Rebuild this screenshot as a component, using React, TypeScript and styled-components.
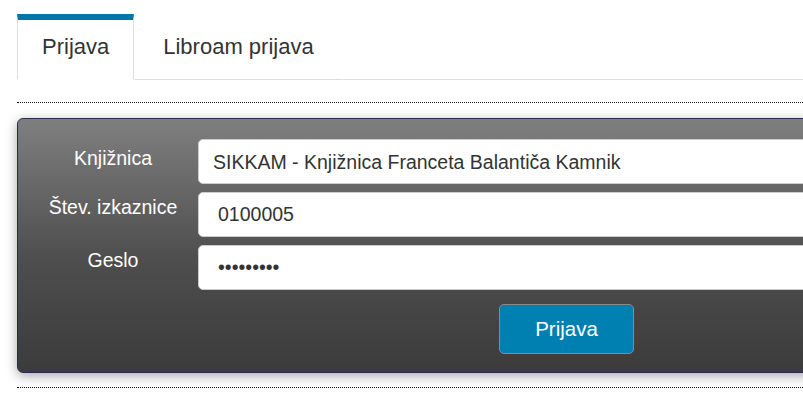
import React from "react";
import styled, { createGlobalStyle } from "styled-components";

const GlobalStyle = createGlobalStyle`
  html, body {
    margin: 0;
    padding: 0;
    background: #fff;
    overflow: hidden;
  }
  body {
    font-family: "Liberation Sans", Arial, sans-serif;
  }
`;

const Page = styled.div`
  width: 1100px;
  padding: 14px 0 0 17px;
`;

const TabBar = styled.ul`
  display: flex;
  margin: 0;
  padding: 0;
  list-style: none;
  border-bottom: 1px solid #ddd;
`;

const Tab = styled.li<{ $active?: boolean }>`
  font-size: 22px;
  line-height: 25px;
  color: #333;
  padding: ${(p) => (p.$active ? "14px 24px 20px" : "20px 28px 20px")};
  margin-bottom: -1px;
  background: #fff;
  border-top: ${(p) => (p.$active ? "6px solid #0077a8" : "0")};
  border-left: 1px solid ${(p) => (p.$active ? "#ddd" : "transparent")};
  border-right: 1px solid ${(p) => (p.$active ? "#ddd" : "transparent")};
  border-bottom: 1px solid ${(p) => (p.$active ? "#fff" : "#ddd")};
`;

const Dotted = styled.hr`
  margin: 0;
  border: 0;
  border-top: 1px dotted #111;
  height: 0;
`;

const Section = styled.div`
  padding: 22px 0 0;
`;

const PanelWrap = styled.div`
  padding: 15px 0 14px;
`;

const Panel = styled.form`
  display: grid;
  grid-template-columns: 180px 1fr;
  row-gap: 8px;
  padding: 20px 0 18px;
  border: 1px solid #24304a;
  border-radius: 6px;
  background: linear-gradient(to bottom, #7f7f7f 0%, #4e4e4e 55%, #3b3b3b 100%);
  box-shadow: 0 3px 12px rgba(0, 0, 0, 0.35);
`;

const Label = styled.label<{ $offset: number }>`
  color: #fff;
  font-size: 19.5px;
  line-height: 22px;
  text-align: center;
  padding: ${(p) => p.$offset}px 0 0 10px;
`;

const Field = styled.div`
  height: 45px;
  box-sizing: border-box;
  border: 1px solid #ccc;
  border-radius: 5px;
  background: #fff;
  display: flex;
  align-items: center;
`;

const Select = styled.select`
  appearance: none;
  border: 0;
  background: transparent;
  width: 100%;
  padding: 0 14px;
  font-family: inherit;
  font-size: 19.5px;
  color: #333;
  outline: none;
`;

const Input = styled.input`
  border: 0;
  background: transparent;
  width: 100%;
  padding: 0 19px;
  font-family: inherit;
  font-size: 19.5px;
  color: #333;
  outline: none;
`;

const Actions = styled.div`
  grid-column: 2;
  padding: 6px 0 0 301px;
`;

const Button = styled.button`
  width: 135px;
  height: 50px;
  border: 1px solid #8a8a8a;
  border-radius: 5px;
  background: #007fb1;
  color: #fff;
  font-family: inherit;
  font-size: 20.5px;
`;

export default function App() {
  return (
    <Page>
      <GlobalStyle />
      <TabBar>
        <Tab $active>Prijava</Tab>
        <Tab>Libroam prijava</Tab>
      </TabBar>
      <Section>
        <Dotted />
        <PanelWrap>
          <Panel onSubmit={(e) => e.preventDefault()}>
            <Label $offset={8}>Knjižnica</Label>
            <Field>
              <Select defaultValue="sikkam">
                <option value="sikkam">SIKKAM - Knjižnica Franceta Balantiča Kamnik</option>
              </Select>
            </Field>
            <Label $offset={4}>Štev. izkaznice</Label>
            <Field>
              <Input type="text" defaultValue="0100005" readOnly />
            </Field>
            <Label $offset={4}>Geslo</Label>
            <Field>
              <Input type="password" defaultValue="123456789" readOnly />
            </Field>
            <Actions>
              <Button type="submit">Prijava</Button>
            </Actions>
          </Panel>
        </PanelWrap>
        <Dotted />
      </Section>
    </Page>
  );
}
